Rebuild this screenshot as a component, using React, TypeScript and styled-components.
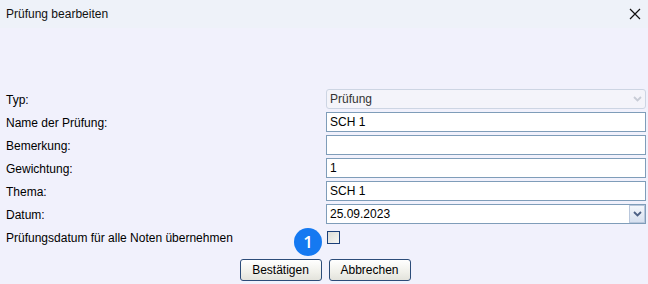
import React from "react";
import styled, { createGlobalStyle } from "styled-components";

const Global = createGlobalStyle`
  html, body { margin: 0; padding: 0; }
  body { font-family: "Liberation Sans", Arial, sans-serif; font-size: 12px; color: #000; }
`;

const Window = styled.div`
  width: 648px;
  height: 284px;
  background: #f1f1fc;
  display: flex;
  flex-direction: column;
  overflow: hidden;
`;

const TitleBar = styled.div`
  height: 28px;
  background: #eef2f9;
  display: flex;
  align-items: center;
  justify-content: space-between;
  padding: 0 6px 0 6px;
  flex: none;
`;

const Title = styled.span`
  color: #111;
`;

const CloseBtn = styled.span`
  width: 12px;
  height: 12px;
  margin-right: 1px;
  display: flex;
`;

const Body = styled.div`
  padding: 61px 2px 0 6px;
  display: flex;
  flex-direction: column;
`;

const Form = styled.div`
  display: grid;
  grid-template-columns: 320px 320px;
  grid-auto-rows: 20px;
  row-gap: 3px;
`;

const Label = styled.div`
  display: flex;
  align-items: center;
  padding-top: 1px;
`;

const Field = styled.div<{ $disabled?: boolean }>`
  display: flex;
  align-items: center;
  border: 1px solid ${(p) => (p.$disabled ? "#cdd5e3" : "#7f9db9")};
  border-radius: ${(p) => (p.$disabled ? "3px" : "0")};
  background: ${(p) => (p.$disabled ? "#f4f4fa" : "#fff")};
  color: ${(p) => (p.$disabled ? "#333" : "#000")};
  padding-left: 3px;
  box-sizing: border-box;
  height: 20px;
  position: relative;
`;

const FieldText = styled.span`
  flex: 1;
`;

const ArrowBox = styled.div<{ $disabled?: boolean }>`
  width: 16px;
  height: 18px;
  display: flex;
  align-items: center;
  justify-content: center;
  box-sizing: border-box;
  border: ${(p) => (p.$disabled ? "none" : "1px solid #b9c7dc")};
  background: ${(p) =>
    p.$disabled ? "transparent" : "linear-gradient(#f3f6fb, #d7e1f0)"};
`;

const CheckRow = styled.div`
  display: grid;
  grid-template-columns: 321px 1fr;
  height: 22px;
  margin-top: 2px;
  align-items: center;
`;

const CheckCell = styled.div`
  position: relative;
  display: flex;
  align-items: center;
`;

const CheckBox = styled.div`
  width: 13px;
  height: 13px;
  box-sizing: border-box;
  border: 1px solid #1c3f78;
  background: linear-gradient(135deg, #dcdcd6, #f7f7f4);
`;

const Badge = styled.div`
  position: absolute;
  left: -33px;
  top: -3px;
  width: 28px;
  height: 28px;
  border-radius: 50%;
  background: #1579f1;
  color: #fff;
  font-family: "Open Sans", "Noto Sans", sans-serif;
  font-weight: 600;
  font-size: 17px;
  display: flex;
  align-items: center;
  justify-content: center;
`;

const Buttons = styled.div`
  display: flex;
  justify-content: center;
  gap: 7px;
  margin-top: 11px;
  padding-right: 2px;
`;

const Button = styled.button`
  width: 82px;
  height: 22px;
  border: 1px solid #2c4c79;
  border-radius: 3px;
  background: linear-gradient(#ffffff, #f0f0ea 60%, #e3e3dc);
  font-family: inherit;
  font-size: inherit;
  color: #000;
  padding: 0;
`;

const Chevron = ({ color }: { color: string }) => (
  <svg width="9" height="6" viewBox="0 0 9 6">
    <path d="M1 1 L4.5 4.5 L8 1" fill="none" stroke={color} strokeWidth="1.8" />
  </svg>
);

const rows = [
  { label: "Typ:", value: "Prüfung", kind: "disabledCombo" },
  { label: "Name der Prüfung:", value: "SCH 1" },
  { label: "Bemerkung:", value: "" },
  { label: "Gewichtung:", value: "1" },
  { label: "Thema:", value: "SCH 1" },
  { label: "Datum:", value: "25.09.2023", kind: "combo" },
];

export default function App() {
  return (
    <Window>
      <Global />
      <TitleBar>
        <Title>Prüfung bearbeiten</Title>
        <CloseBtn>
          <svg width="12" height="12" viewBox="0 0 12 12">
            <path d="M1 1 L11 11 M11 1 L1 11" stroke="#111" strokeWidth="1.2" />
          </svg>
        </CloseBtn>
      </TitleBar>
      <Body>
        <Form>
          {rows.map((r) => (
            <React.Fragment key={r.label}>
              <Label>{r.label}</Label>
              <Field $disabled={r.kind === "disabledCombo"}>
                <FieldText>{r.value}</FieldText>
                {r.kind === "disabledCombo" && (
                  <ArrowBox $disabled>
                    <Chevron color="#c8ccd6" />
                  </ArrowBox>
                )}
                {r.kind === "combo" && (
                  <ArrowBox>
                    <Chevron color="#4d6185" />
                  </ArrowBox>
                )}
              </Field>
            </React.Fragment>
          ))}
        </Form>
        <CheckRow>
          <Label>Prüfungsdatum für alle Noten übernehmen</Label>
          <CheckCell>
            <Badge>1</Badge>
            <CheckBox />
          </CheckCell>
        </CheckRow>
        <Buttons>
          <Button>Bestätigen</Button>
          <Button>Abbrechen</Button>
        </Buttons>
      </Body>
    </Window>
  );
}
